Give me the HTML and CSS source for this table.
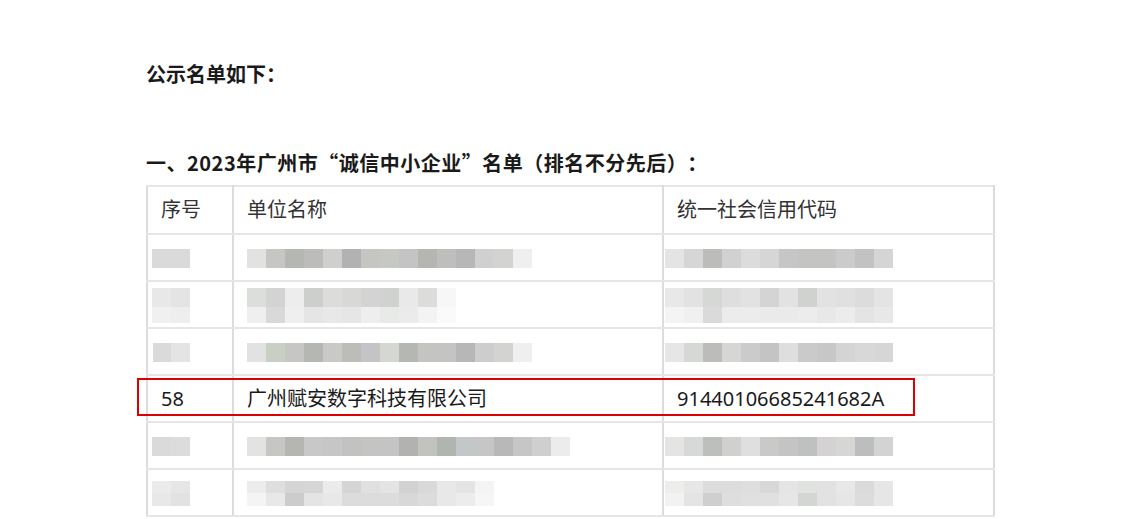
FILE: index.html
```html
<!DOCTYPE html>
<html lang="zh-CN">

<head>
    <meta charset="UTF-8">
    <meta name="viewport" content="width=device-width, initial-scale=1.0">
    <title>公示名单</title>
    <link rel="stylesheet" href="styles.css">
</head>

<body>
    <div class="article">
        <p class="lead">公示名单如下：</p>

        <p class="section-title">一、2023年广州市“诚信中小企业”名单（排名不分先后）：</p>

        <div class="table-wrap">
            <table class="list">
                <colgroup>
                    <col class="col-no">
                    <col class="col-name">
                    <col class="col-code">
                </colgroup>
                <tr class="head">
                    <td>序号</td>
                    <td>单位名称</td>
                    <td>统一社会信用代码</td>
                </tr>
                <tr>
                    <td><div class="mosaic no"><span class="strip r1-no"></span></div></td>
                    <td><div class="mosaic name"><span class="strip r1-name"></span></div></td>
                    <td><div class="mosaic code"><span class="strip r1-code"></span></div></td>
                </tr>
                <tr>
                    <td><div class="mosaic no"><span class="strip r2-no-a"></span><span class="strip low r2-no-b"></span></div></td>
                    <td><div class="mosaic name"><span class="strip r2-name-a"></span><span class="strip low r2-name-b"></span></div></td>
                    <td><div class="mosaic code"><span class="strip r2-code-a"></span><span class="strip low r2-code-b"></span></div></td>
                </tr>
                <tr>
                    <td><div class="mosaic no"><span class="strip r3-no"></span></div></td>
                    <td><div class="mosaic name"><span class="strip r3-name"></span></div></td>
                    <td><div class="mosaic code"><span class="strip r3-code"></span></div></td>
                </tr>
                <tr class="target">
                    <td>58</td>
                    <td>广州赋安数字科技有限公司</td>
                    <td>91440106685241682A</td>
                </tr>
                <tr>
                    <td><div class="mosaic no"><span class="strip r5-no"></span></div></td>
                    <td><div class="mosaic name"><span class="strip r5-name"></span></div></td>
                    <td><div class="mosaic code"><span class="strip r5-code"></span></div></td>
                </tr>
                <tr>
                    <td><div class="mosaic no"><span class="strip half r6-no-a"></span><span class="strip half r6-no-b"></span></div></td>
                    <td><div class="mosaic name"><span class="strip half r6-name-a"></span><span class="strip half r6-name-b"></span></div></td>
                    <td><div class="mosaic code"><span class="strip half r6-code-a"></span><span class="strip half r6-code-b"></span></div></td>
                </tr>
            </table>

            <div class="highlight"></div>
        </div>
    </div>
</body>

</html>
```

FILE: styles.css
```css
body {
    margin: 0;
    background: #fff;
    color: #333;
    font-family: "Noto Sans", "Noto Sans CJK SC", sans-serif;
}

.article {
    padding: 59px 0 0 146px;
}

.lead,
.section-title {
    margin: 0;
    font-family: "Noto Sans CJK SC", "Noto Sans", sans-serif;
    font-size: 20px;
    line-height: 30px;
    font-weight: 700;
    color: #1a1a1a;
    text-spacing-trim: space-all;
}

.section-title {
    margin-top: 59px;
    margin-bottom: 7px;
    letter-spacing: 0.5px;
}

.table-wrap {
    position: relative;
    width: 847px;
}

.list {
    border-collapse: collapse;
    table-layout: fixed;
    width: 847px;
    font-size: 20px;
}

.col-no { width: 86px; }
.col-name { width: 430px; }
.col-code { width: 331px; }

.list td {
    border-top: 2px solid #e6e6e6;
    border-bottom: 2px solid #e6e6e6;
    border-left: 2px solid #dcdcdc;
    border-right: 2px solid #dcdcdc;
    padding: 0 13px;
    height: 45px;
    vertical-align: middle;
    line-height: 28px;
    color: #2b2b2b;
}

.list .head td {
    height: 46px;
    color: #333;
}

.list .target td {
    color: #1a1a1a;
}

/* pixelated (blurred) entries */
.mosaic {
    display: flex;
    flex-direction: column;
    margin-top: 2px;
}

.mosaic.no { margin-left: -9px; width: 38px; }
.mosaic.name { margin-left: 0; }
.mosaic.code { margin-left: -12px; width: 228px; }

.strip {
    display: block;
    height: 19px;
}

.strip.low { height: 16px; }
.strip.half { height: 12px; }
.strip.half + .strip.half { height: 13px; }

.r1-no { background: linear-gradient(to right, #dadada 0 19px, #dadada 0 38px); }
.r1-name {
    width: 285px;
    background: linear-gradient(to right, #e2e2e0 0 19px, #c6c6c4 0 38px, #b5b7b2 0 57px, #bcbdba 0 76px, #cfd0cd 0 95px, #b2b2b2 0 114px, #c5c6c2 0 133px, #c5c9c2 0 152px, #c4c4c4 0 171px, #b5b6b2 0 190px, #bebebc 0 209px, #b7b7b7 0 228px, #cfd0cf 0 247px, #d3d4d2 0 266px, #efefef 0 285px);
}
.r1-code { background: linear-gradient(to right, #e4e4e4 0 19px, #d6d6d6 0 38px, #bcbdba 0 57px, #d1d1d1 0 76px, #dcdcdc 0 95px, #d6d6d6 0 114px, #c6c6c6 0 133px, #c4c4c2 0 152px, #c4c4c2 0 171px, #cbcbcb 0 190px, #c2c2c2 0 209px, #d5d5d5 0 228px); }

.r2-no-a { background: linear-gradient(to right, #e8e8e8 0 19px, #e4e4e4 0 38px); }
.r2-no-b { background: linear-gradient(to right, #f0f0f0 0 19px, #eeeeee 0 38px); }
.r2-name-a {
    width: 209px;
    background: linear-gradient(to right, #dcdedb 0 19px, #d3d3d3 0 38px, #ededed 0 57px, #cdcfcd 0 76px, #dcdddb 0 95px, #d8d8d6 0 114px, #d3d3d3 0 133px, #d0d2cf 0 152px, #e9e9e9 0 171px, #dcdcda 0 190px, #f7f7f7 0 209px);
}
.r2-name-b {
    width: 209px;
    background: linear-gradient(to right, #efefef 0 19px, #d9d9d9 0 38px, #efefef 0 57px, #e5e5e5 0 76px, #e8e8e8 0 95px, #e6e6e6 0 114px, #eeeeee 0 133px, #e8eae7 0 152px, #ebebeb 0 171px, #f3f3f3 0 190px, #fafafa 0 209px);
}
.r2-code-a { background: linear-gradient(to right, #e8e8e8 0 19px, #e2e2e2 0 38px, #d6d8d5 0 57px, #dedede 0 76px, #e2e2e2 0 95px, #d4d4d4 0 114px, #e2e2e2 0 133px, #d0d2cf 0 152px, #e2e2e2 0 171px, #e0e0e0 0 190px, #dcdcdc 0 209px, #e4e4e4 0 228px); }
.r2-code-b { background: linear-gradient(to right, #f4f4f4 0 19px, #f0f0f0 0 38px, #dadada 0 57px, #ececec 0 76px, #ececec 0 95px, #eaeaea 0 114px, #eaeaea 0 133px, #ececec 0 152px, #e8e8e8 0 171px, #ececec 0 190px, #e4e4e4 0 209px, #e8e8e8 0 228px); }

.r3-no { background: linear-gradient(to right, #ffffff 0 1px, #dadada 0 19px, #e4e4e4 0 38px); }
.r3-name {
    width: 285px;
    background: linear-gradient(to right, #e2e2e2 0 19px, #c8cfc4 0 38px, #c6c7c4 0 57px, #b5b7b3 0 76px, #c9cac7 0 95px, #bcbdb8 0 114px, #c4c4c6 0 133px, #d5d7d1 0 152px, #b5b7b2 0 171px, #c4c5c2 0 190px, #c4c4c2 0 209px, #b7b7b7 0 228px, #cccdcc 0 247px, #d3d4d2 0 266px, #efefef 0 285px);
}
.r3-code { background: linear-gradient(to right, #e6e6e6 0 19px, #d6d8d6 0 38px, #bcbdba 0 57px, #d6d6d4 0 76px, #cbcbcb 0 95px, #c4c4c4 0 114px, #dedede 0 133px, #cacaca 0 152px, #c7c7c7 0 171px, #d4d4d4 0 190px, #d8d8d8 0 209px, #d6d6d6 0 228px); }

.r5-no { background: linear-gradient(to right, #dadada 0 19px, #dcdcdc 0 38px); }
.r5-name {
    width: 323px;
    background: linear-gradient(to right, #e3e4e2 0 19px, #c6c6c4 0 38px, #b5b6b1 0 57px, #c8c8c8 0 76px, #c6c6c6 0 95px, #c2c2c0 0 114px, #c4c4c2 0 133px, #c4c4c4 0 152px, #b2b2b1 0 171px, #c2c3bf 0 190px, #b1b5af 0 209px, #c4c7c7 0 228px, #c6c6c6 0 247px, #b8b8b8 0 266px, #c6c6c6 0 285px, #cfcfcf 0 304px, #ececec 0 323px);
}
.r5-code { background: linear-gradient(to right, #e4e4e2 0 19px, #d6d9d8 0 38px, #bcbfbb 0 57px, #d0d0ce 0 76px, #dfdfdf 0 95px, #c9c9c7 0 114px, #c4c4c4 0 133px, #bfc1c0 0 152px, #d4d2d3 0 171px, #d6d6d4 0 190px, #bcbdbf 0 209px, #d3d3d3 0 228px); }

.r6-no-a { background: linear-gradient(to right, #ebebeb 0 19px, #e6e6e6 0 38px); }
.r6-no-b { background: linear-gradient(to right, #e8e8e8 0 19px, #e2e2e2 0 38px); }
.r6-name-a {
    width: 247px;
    background: linear-gradient(to right, #ececec 0 19px, #dedede 0 38px, #d5d5d5 0 57px, #d6d6d6 0 76px, #ebebeb 0 95px, #d5d5d5 0 114px, #e0e0e0 0 133px, #e4e4e4 0 152px, #d2d2d2 0 171px, #d9d9d9 0 190px, #e8e8e8 0 209px, #e4e4e4 0 228px, #f4f4f4 0 247px);
}
.r6-name-b {
    width: 247px;
    background: linear-gradient(to right, #f4f4f4 0 19px, #e8e8e8 0 38px, #cccccc 0 57px, #e4e4e4 0 76px, #e8e8e8 0 95px, #dcdcdc 0 114px, #dcdcdc 0 133px, #dcdcdc 0 152px, #d8d8d8 0 171px, #dcdcdc 0 190px, #e8e8e8 0 209px, #ececec 0 228px, #f6f6f6 0 247px);
}
.r6-code-a { background: linear-gradient(to right, #ededec 0 19px, #e6e7e6 0 38px, #dcdcdc 0 57px, #dcdcdc 0 76px, #dedede 0 95px, #d8d8d8 0 114px, #e4e5e4 0 133px, #e0e2e0 0 152px, #e2e2e2 0 171px, #e8e8e8 0 190px, #dadada 0 209px, #e6e6e6 0 228px); }
.r6-code-b { background: linear-gradient(to right, #f2f2f2 0 19px, #e4e4e4 0 38px, #cfcfcf 0 57px, #dedede 0 76px, #e0e0e0 0 95px, #e0e0e0 0 114px, #e6e6e6 0 133px, #d4d6d4 0 152px, #e2e2e2 0 171px, #e6e6e6 0 190px, #dcdcdc 0 209px, #e6e6e6 0 228px); }

/* red box around row 58 */
.highlight {
    position: absolute;
    top: 193px;
    left: -9px;
    width: 774px;
    height: 34px;
    border: 2px solid #dc0000;
    pointer-events: none;
}
```
